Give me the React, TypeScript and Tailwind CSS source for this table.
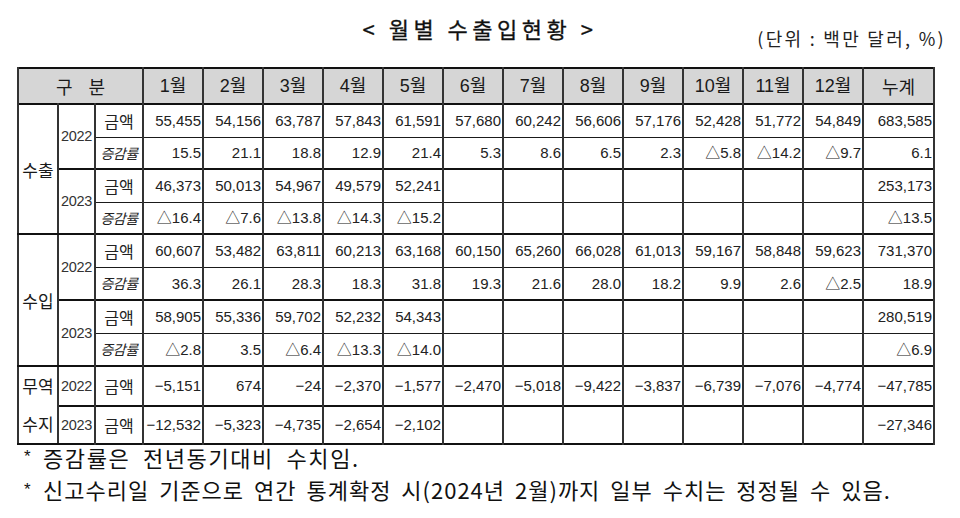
import React from "react";

type Row = {
  group?: { label: React.ReactNode; span: number };
  year?: { label: string; span: number };
  kind: "amt" | "rate";
  values: string[];
  total: string;
  thickTop: boolean;
  h: string;
};

const E = "";

const rows: Row[] = [
  {
    group: { label: "수출", span: 4 },
    year: { label: "2022", span: 2 },
    kind: "amt",
    values: ["55,455", "54,156", "63,787", "57,843", "61,591", "57,680", "60,242", "56,606", "57,176", "52,428", "51,772", "54,849"],
    total: "683,585",
    thickTop: true,
    h: "h-[33px]",
  },
  {
    kind: "rate",
    values: ["15.5", "21.1", "18.8", "12.9", "21.4", "5.3", "8.6", "6.5", "2.3", "△5.8", "△14.2", "△9.7"],
    total: "6.1",
    thickTop: false,
    h: "h-[32px]",
  },
  {
    year: { label: "2023", span: 2 },
    kind: "amt",
    values: ["46,373", "50,013", "54,967", "49,579", "52,241", E, E, E, E, E, E, E],
    total: "253,173",
    thickTop: true,
    h: "h-[33px]",
  },
  {
    kind: "rate",
    values: ["△16.4", "△7.6", "△13.8", "△14.3", "△15.2", E, E, E, E, E, E, E],
    total: "△13.5",
    thickTop: false,
    h: "h-[32px]",
  },
  {
    group: { label: "수입", span: 4 },
    year: { label: "2022", span: 2 },
    kind: "amt",
    values: ["60,607", "53,482", "63,811", "60,213", "63,168", "60,150", "65,260", "66,028", "61,013", "59,167", "58,848", "59,623"],
    total: "731,370",
    thickTop: true,
    h: "h-[33px]",
  },
  {
    kind: "rate",
    values: ["36.3", "26.1", "28.3", "18.3", "31.8", "19.3", "21.6", "28.0", "18.2", "9.9", "2.6", "△2.5"],
    total: "18.9",
    thickTop: false,
    h: "h-[33px]",
  },
  {
    year: { label: "2023", span: 2 },
    kind: "amt",
    values: ["58,905", "55,336", "59,702", "52,232", "54,343", E, E, E, E, E, E, E],
    total: "280,519",
    thickTop: true,
    h: "h-[33px]",
  },
  {
    kind: "rate",
    values: ["△2.8", "3.5", "△6.4", "△13.3", "△14.0", E, E, E, E, E, E, E],
    total: "△6.9",
    thickTop: false,
    h: "h-[33px]",
  },
  {
    group: {
      label: (
        <span className="flex flex-col items-center leading-[38px]">
          <span>무역</span>
          <span>수지</span>
        </span>
      ),
      span: 2,
    },
    year: { label: "2022", span: 1 },
    kind: "amt",
    values: ["−5,151", "674", "−24", "−2,370", "−1,577", "−2,470", "−5,018", "−9,422", "−3,837", "−6,739", "−7,076", "−4,774"],
    total: "−47,785",
    thickTop: true,
    h: "h-[38px]",
  },
  {
    year: { label: "2023", span: 1 },
    kind: "amt",
    values: ["−12,532", "−5,323", "−4,735", "−2,654", "−2,102", E, E, E, E, E, E, E],
    total: "−27,346",
    thickTop: true,
    h: "h-[37px]",
  },
];

const months = ["1월", "2월", "3월", "4월", "5월", "6월", "7월", "8월", "9월", "10월", "11월", "12월"];

const cellBase = "border-x-2 border-x-[#333] border-y border-y-[#1a1a1a] p-0";

export default function App() {
  return (
    <div className="w-[960px] h-[518px] bg-white text-[#1a1a1a] font-['Liberation_Sans','Noto_Sans_CJK_KR',sans-serif] overflow-hidden">
      <div className="grid grid-cols-[1fr_auto_1fr] h-[67px]">
        <div />
        <div className="pt-[13px] text-[22px] leading-[30px] tracking-[4.5px] font-['Noto_Sans_CJK_KR',sans-serif] text-[#111] [-webkit-text-stroke:0.3px_#111]">
          &lt; 월별 수출입현황 &gt;
        </div>
        <div className="flex justify-end items-start pt-[27px] pr-[14px] text-[18px] leading-[22px] tracking-[2.3px] font-['Noto_Sans_CJK_KR',sans-serif] text-[#222]">
          (단위 : 백만 달러, %)
        </div>
      </div>

      <div className="pl-[17px]">
        <table className="table-fixed border-collapse border-2 border-[#111] w-[916px]">
          <colgroup>
            <col className="w-[40px]" />
            <col className="w-[37px]" />
            <col className="w-[48px]" />
            {months.map((m) => (
              <col key={m} className="w-[60px]" />
            ))}
            <col className="w-[71px]" />
          </colgroup>
          <thead>
            <tr className="h-[36px] bg-[#d6d6d6]">
              <th
                colSpan={3}
                className={`${cellBase} text-[18px] font-normal text-center leading-none font-['Noto_Sans_CJK_KR',sans-serif] tracking-[6px] pl-[6px]`}
              >
                구 분
              </th>
              {months.map((m) => (
                <th key={m} className={`${cellBase} text-[18px] font-normal text-center leading-none`}>
                  {m}
                </th>
              ))}
              <th className={`${cellBase} text-[18px] font-normal text-center leading-none font-['Noto_Sans_CJK_KR',sans-serif]`}>
                누계
              </th>
            </tr>
          </thead>
          <tbody>
            {rows.map((r, i) => {
              const top = r.thickTop ? "border-t-2 border-t-[#111]" : "";
              return (
                <tr key={i} className={r.h}>
                  {r.group && (
                    <td
                      rowSpan={r.group.span}
                      className={`${cellBase} ${top} border-b-2 border-b-[#111] text-center align-middle text-[17px] leading-none font-['Noto_Sans_CJK_KR',sans-serif]`}
                    >
                      {r.group.label}
                    </td>
                  )}
                  {r.year && (
                    <td
                      rowSpan={r.year.span}
                      className={`${cellBase} ${top} text-center align-middle text-[14.5px] leading-none tracking-[-0.3px] text-[#333]`}
                    >
                      {r.year.label}
                    </td>
                  )}
                  {r.kind === "amt" ? (
                    <td className={`${cellBase} ${top} text-center text-[16px] leading-none font-['Noto_Sans_CJK_KR',sans-serif] text-[#222]`}>
                      금액
                    </td>
                  ) : (
                    <td className={`${cellBase} ${top} text-center text-[14px] leading-none italic font-['Noto_Sans_CJK_KR',sans-serif] text-[#222] tracking-[-0.5px]`}>
                      증감률
                    </td>
                  )}
                  {r.values.map((v, j) => (
                    <td key={j} className={`${cellBase} ${top} text-right text-[15px] leading-none pr-[1px] whitespace-nowrap text-[#222]`}>
                      {v}
                    </td>
                  ))}
                  <td className={`${cellBase} ${top} text-right text-[15px] leading-none pr-[1px] whitespace-nowrap text-[#222]`}>
                    {r.total}
                  </td>
                </tr>
              );
            })}
          </tbody>
        </table>
      </div>

      <div className="pl-[24px] -mt-[3px] font-['Noto_Sans_CJK_KR',sans-serif] text-[22px] text-[#111]">
        <div className="flex items-center h-[30px]">
          <span className="w-[19px] text-[17px] font-['Liberation_Sans',sans-serif]">*</span>
          <span className="tracking-[1.6px] [word-spacing:6px]">증감률은 전년동기대비 수치임.</span>
        </div>
        <div className="flex items-center h-[35px]">
          <span className="w-[19px] text-[17px] font-['Liberation_Sans',sans-serif]">*</span>
          <span className="tracking-[1px] [word-spacing:4px]">신고수리일 기준으로 연간 통계확정 시(2024년 2월)까지 일부 수치는 정정될 수 있음.</span>
        </div>
      </div>
    </div>
  );
}
